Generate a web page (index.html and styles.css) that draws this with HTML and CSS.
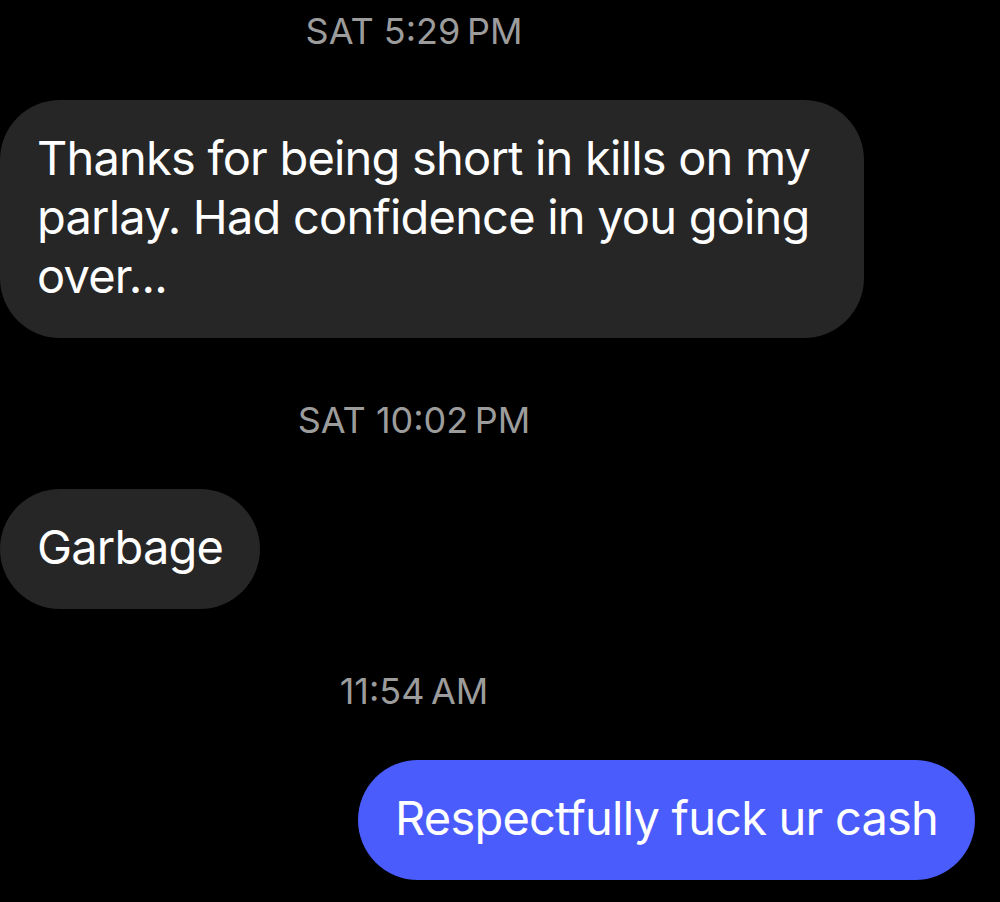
FILE: index.html
```html
<!DOCTYPE html>
<html lang="en">
<head>
<meta charset="utf-8">
<title>Messages</title>
<link rel="stylesheet" href="styles.css">
</head>
<body>
<main class="chat">
  <div class="time time-first">SAT 5:29&#8239;PM</div>
  <div class="bubble incoming bubble-first">Thanks for being short in kills on my parlay. Had confidence in you going over...</div>
  <div class="time">SAT 10:02&#8239;PM</div>
  <div class="bubble incoming">Garbage</div>
  <div class="time">11:54&#8239;AM</div>
  <div class="bubble outgoing">Respectfully fuck ur cash</div>
</main>
</body>
</html>
```

FILE: styles.css
```css
html, body {
  margin: 0;
  padding: 0;
  background: #000;
}

body {
  width: 1000px;
  height: 902px;
  overflow: hidden;
  font-family: Inter, "Noto Sans", sans-serif;
}

.chat {
  display: flex;
  flex-direction: column;
  align-items: flex-start;
}

.time {
  align-self: stretch;
  box-sizing: border-box;
  padding-right: 172px;
  text-align: center;
  font-size: 36px;
  line-height: 44px;
  color: #9c9c9c;
  margin-top: 60px;
}

.time-first {
  margin-top: 9px;
}

.bubble {
  box-sizing: border-box;
  max-width: 864px;
  margin-top: 47px;
  padding: 28px 37px 33px 37px;
  border-radius: 60px;
  font-size: 47px;
  letter-spacing: -0.8px;
  line-height: 59px;
  color: #fff;
}

.bubble-first {
  width: 864px;
}

.incoming {
  background: #262626;
}

.outgoing {
  align-self: flex-end;
  margin-right: 25px;
  background: #4a5cfc;
}
```
